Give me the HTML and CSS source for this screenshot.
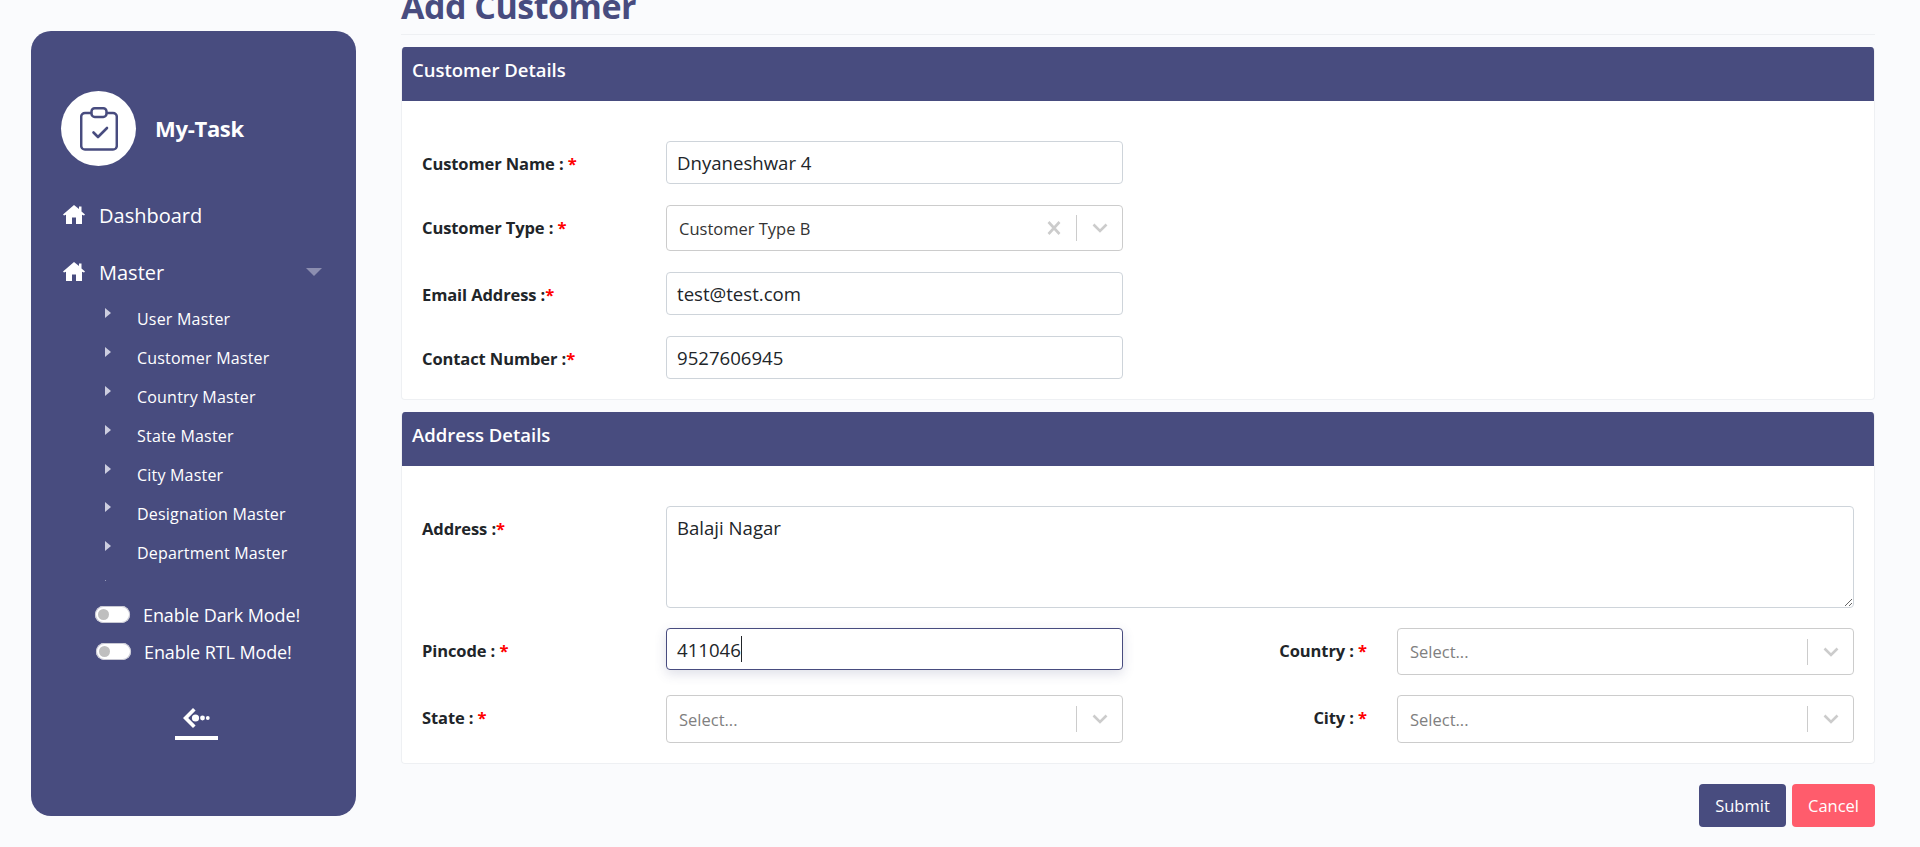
FILE: index.html
```html
<!DOCTYPE html>
<html lang="en">
<head>
<meta charset="utf-8">
<title>Add Customer</title>
<link rel="stylesheet" href="styles.css">
</head>
<body>
<div class="page">
  <aside class="sidebar">
    <div class="brand">
      <span class="brand-logo">
        <svg class="brand-icon" viewBox="0 0 38 44" fill="none" stroke="#484c7f" stroke-width="2.5" stroke-linecap="round" stroke-linejoin="round">
          <path d="M11 6H5a3.8 3.8 0 0 0-3.8 3.8v29A3.8 3.8 0 0 0 5 42.6h28a3.8 3.8 0 0 0 3.8-3.8v-29A3.8 3.8 0 0 0 33 6h-6"/>
          <rect x="11.5" y="1.3" width="15" height="8.6" rx="3.2"/>
          <path d="M13.5 25.5l4.5 4.5 9-9" stroke-width="2.6"/>
        </svg>
      </span>
      <span class="brand-name">My-Task</span>
    </div>
    <nav class="menu">
      <a class="menu-link">
        <svg class="home-icon" viewBox="0 0 22 19"><path d="M11 0L0 9.4l1 1.2 2-.8V19h6v-6.500h4V19h6V9.800l2 .8 1-1.200-3.500-3V1.500H16V4z"/></svg>
        <span>Dashboard</span>
      </a>
      <a class="menu-link">
        <svg class="home-icon" viewBox="0 0 22 19"><path d="M11 0L0 9.4l1 1.2 2-.8V19h6v-6.500h4V19h6V9.800l2 .8 1-1.200-3.500-3V1.500H16V4z"/></svg>
        <span>Master</span>
        <i class="caret-down"></i>
      </a>
      <ul class="submenu">
        <li><i class="caret-right"></i><span>User Master</span></li>
        <li><i class="caret-right"></i><span>Customer Master</span></li>
        <li><i class="caret-right"></i><span>Country Master</span></li>
        <li><i class="caret-right"></i><span>State Master</span></li>
        <li><i class="caret-right"></i><span>City Master</span></li>
        <li><i class="caret-right"></i><span>Designation Master</span></li>
        <li><i class="caret-right"></i><span>Department Master</span></li>
        <li><i class="caret-right"></i></li>
      </ul>
    </nav>
    <div class="mode-row"><span class="toggle"></span><span>Enable Dark Mode!</span></div>
    <div class="mode-row mode-row-rtl"><span class="toggle"></span><span>Enable RTL Mode!</span></div>
    <div class="collapse-btn">
      <svg class="collapse-icon" viewBox="0 0 27 20" fill="#fff">
        <path d="M10 0l2.6 2.6L5.200 10l7.400 7.400L10 20 0 10z"/>
        <circle cx="12.5" cy="10" r="3.6"/><circle cx="19.5" cy="10" r="2.4"/><circle cx="24.8" cy="10" r="1.9"/>
      </svg>
      <span class="collapse-bar"></span>
    </div>
  </aside>

  <main class="content">
    <h1 class="page-title">Add Customer</h1>

    <section class="card">
      <h2 class="card-head">Customer Details</h2>
      <div class="card-body form-single">
        <label class="label">Customer Name : <b>*</b></label>
        <input class="field" value="Dnyaneshwar 4">
        <label class="label">Customer Type : <b>*</b></label>
        <div class="select"><span class="select-value">Customer Type B</span>
          <svg class="select-clear" viewBox="0 0 14 14"><path d="M1.5 1l11 12M12.5 1l-11 12"/></svg>
          <i class="select-sep"></i>
          <svg class="select-arrow" viewBox="0 0 16 10"><path d="M1.5 1.5L8 8l6.500-6.500"/></svg>
        </div>
        <label class="label">Email Address :<b>*</b></label>
        <input class="field" value="test@test.com">
        <label class="label">Contact Number :<b>*</b></label>
        <input class="field" value="9527606945">
      </div>
    </section>

    <section class="card">
      <h2 class="card-head">Address Details</h2>
      <div class="card-body form-double">
        <label class="label">Address :<b>*</b></label>
        <textarea class="area">Balaji Nagar</textarea>
        <label class="label">Pincode : <b>*</b></label>
        <div class="field field-focus">411046<i class="text-caret"></i></div>
        <label class="label label-right">Country : <b>*</b></label>
        <div class="select"><span class="select-placeholder">Select...</span>
          <i class="select-sep"></i>
          <svg class="select-arrow" viewBox="0 0 16 10"><path d="M1.5 1.5L8 8l6.500-6.500"/></svg>
        </div>
        <label class="label">State : <b>*</b></label>
        <div class="select select-tall"><span class="select-placeholder">Select...</span>
          <i class="select-sep"></i>
          <svg class="select-arrow" viewBox="0 0 16 10"><path d="M1.5 1.5L8 8l6.500-6.500"/></svg>
        </div>
        <label class="label label-right">City : <b>*</b></label>
        <div class="select select-tall"><span class="select-placeholder">Select...</span>
          <i class="select-sep"></i>
          <svg class="select-arrow" viewBox="0 0 16 10"><path d="M1.5 1.5L8 8l6.500-6.500"/></svg>
        </div>
      </div>
    </section>

    <div class="actions">
      <button class="btn btn-primary">Submit</button>
      <button class="btn btn-danger">Cancel</button>
    </div>
  </main>
</div>
</body>
</html>
```

FILE: styles.css
```css
* { box-sizing: border-box; }
html, body { margin: 0; height: 100%; overflow: hidden; }
body {
  background: #fafbfd;
  color: #212529;
  font-family: "Open Sans", "Noto Sans", sans-serif;
  font-size: 16px;
}
.page { display: flex; align-items: flex-start; padding-left: 31px; padding-right: 45px; }

/* sidebar */
.sidebar {
  flex: 0 0 325px;
  height: 785px;
  margin-top: 31px;
  background: #484c7f;
  border-radius: 20px;
  color: #fff;
  padding: 60px 30px 0;
  display: flex;
  flex-direction: column;
}
.brand { display: flex; align-items: center; gap: 20px; height: 75px; }
.brand-logo {
  width: 75px; height: 75px; border-radius: 50%; background: #fff;
  display: flex; align-items: center; justify-content: center;
}
.brand-icon { width: 38px; height: 44px; }
.brand-name { font-size: 22px; font-weight: 700; letter-spacing: -0.3px; margin: -2px 0 0 -1px; }
.menu { margin-top: 34px; }
.menu-link { display: flex; align-items: center; height: 30px; font-size: 20px; margin-bottom: 27px; }
.home-icon { width: 22px; height: 19px; fill: #fff; margin: -1px 16px 0 2px; flex: none; }
.menu-link span { margin-left: -2px; }
.caret-down {
  margin-left: auto; margin-right: 4px;
  border-left: 8px solid transparent; border-right: 8px solid transparent;
  border-top: 8px solid #8c8eb0;
}
.submenu { list-style: none; margin: -14px 0 0; padding: 0; height: 281px; overflow: hidden; }
.submenu li { display: flex; height: 38.9px; align-items: center; font-size: 16px; letter-spacing: 0.2px; padding-left: 44px; }
.caret-right {
  flex: none; margin-right: 26px; margin-top: -13px;
  border-top: 5.5px solid transparent; border-bottom: 5.5px solid transparent;
  border-left: 6px solid #cdcee0;
}
.mode-row { display: flex; align-items: center; gap: 13px; height: 37px; font-size: 18px; letter-spacing: -0.1px; padding-left: 34px; }
.menu + .mode-row { margin-top: 15px; }
.mode-row-rtl { padding-left: 35px; }
.toggle {
  position: relative; width: 35px; height: 17px; border-radius: 9px; background: #fff; flex: none;
  box-shadow: inset 0 0 0 1px #c9c9d4;
}
.toggle::after {
  content: ""; position: absolute; left: 3px; top: 3px; width: 11px; height: 11px; border-radius: 50%; background: #bfbfbf;
}
.collapse-btn { display: flex; flex-direction: column; align-items: center; width: 43px; margin: 38px 0 0 114px; }
.collapse-icon { width: 27px; height: 20px; }
.collapse-bar { width: 43px; height: 4px; background: #fff; margin-top: 8px; }

/* content */
.content { flex: 1; min-width: 0; margin-left: 45px; }
.page-title {
  margin: -14px 0 0; padding: 0 0 6px; height: 49px; line-height: 40px;
  font-size: 34px; font-weight: 700; color: #484c7f; letter-spacing: -0.5px;
  border-bottom: 1px solid #eef0f3;
}
.card { background: #fff; border: 1px solid #eef0f3; border-top: 0; border-radius: 4px; margin-top: 12px; overflow: hidden; }
.card-head {
  margin: 0; height: 54px; background: #484c7f; color: #fff;
  font-size: 18.5px; font-weight: 600; line-height: 46px; padding-left: 10px;
}
.card-body { display: grid; padding: 40px 20px 20px; align-items: start; }
.form-single { grid-template-columns: 244px 457px; row-gap: 21px; }
.form-double { grid-template-columns: 244px 457px 274px 457px; row-gap: 20px; }
.label { height: 40px; font-size: 16.5px; font-weight: 700; line-height: 46px; letter-spacing: -0.1px; }
.label b { color: #f00; font-weight: 700; }
.label-right { text-align: right; padding-right: 30px; }
.field, .area {
  font: inherit; font-size: 18.6px; color: #212529;
  border: 1px solid #ced4da; border-radius: 4px; background: #fff; padding: 0 10px; margin: 0;
  outline: none; width: 100%;
}
.field { height: 43px; display: flex; align-items: center; }
.field-focus {
  height: 42px; border-color: #484c7f;
  box-shadow: 0 4px 12px rgba(72, 76, 127, .18);
}
.text-caret { display: inline-block; width: 1px; height: 26px; background: #212529; }
.area { grid-column: 2 / 5; height: 102px; padding: 8px 10px; display: block; }
.select {
  display: flex; align-items: center; height: 47px;
  border: 1px solid #cccccc; border-radius: 4px; background: #fff; padding: 0 14px 0 12px;
}
.form-single .select { height: 46px; }
.select-tall { height: 48px; }
.select-value { flex: 1; font-size: 16.5px; color: #333; }
.select-placeholder { flex: 1; font-size: 16.5px; color: #808080; }
.select-clear { width: 14px; height: 14px; fill: none; stroke: #ccc; stroke-width: 2.6; margin-right: 15px; }
.select-sep { width: 1px; height: 26px; background: #ccc; margin-right: 15px; }
.select-arrow { width: 16px; height: 10px; fill: none; stroke: #ccc; stroke-width: 2.6; }

.actions { display: flex; justify-content: flex-end; gap: 6px; margin-top: 20px; }
.btn {
  height: 43px; border: 0; border-radius: 4px; color: #fff; font: inherit; font-size: 16.5px; padding: 0;
}
.btn-primary { width: 87px; background: #484c7f; }
.btn-danger { width: 83px; background: #ff5c6c; }
```
